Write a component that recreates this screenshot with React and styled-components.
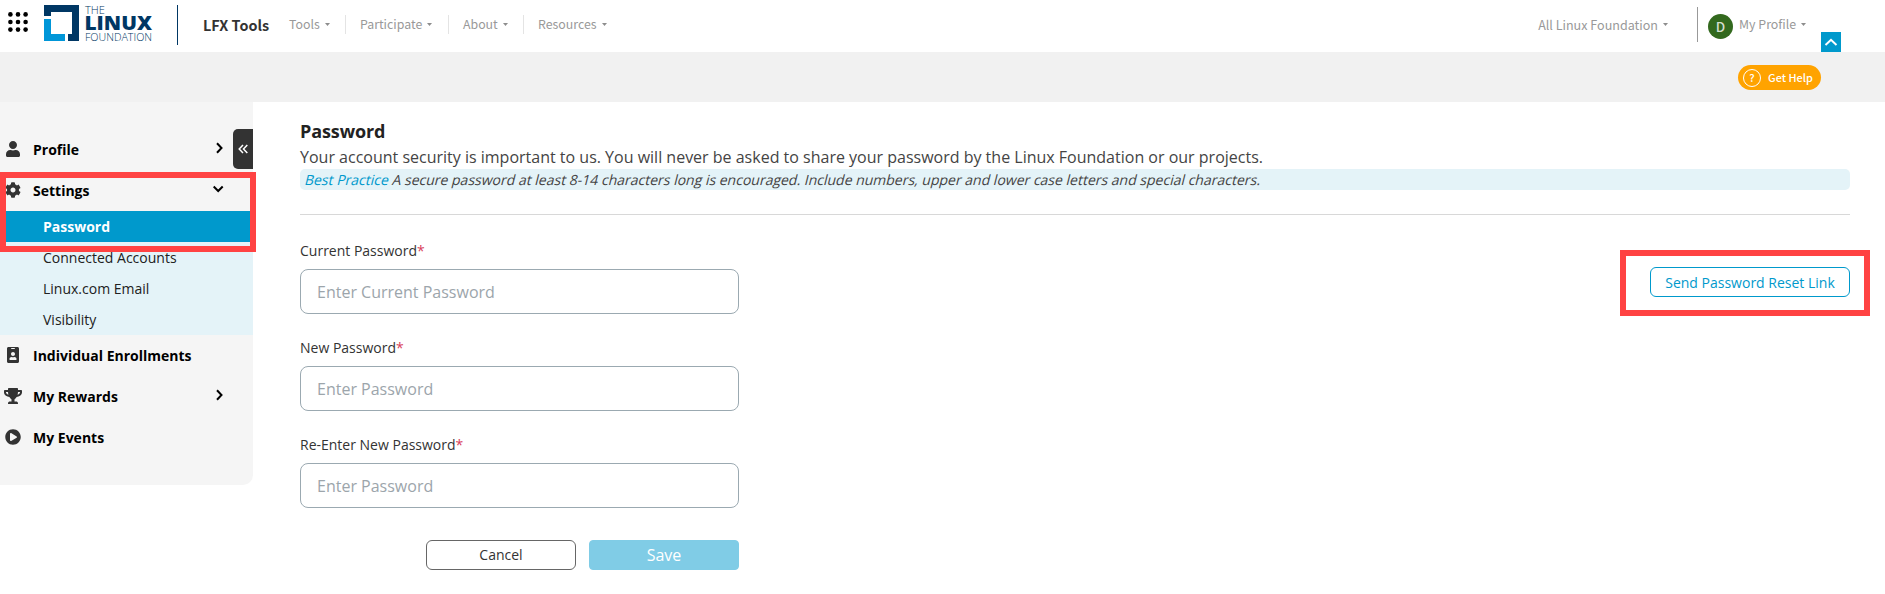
import React from 'react';
import styled, { createGlobalStyle, css } from 'styled-components';
import { FaUser, FaCog, FaIdBadge, FaTrophy, FaPlayCircle } from 'react-icons/fa';

const navFont = '"Noto Sans CJK JP", "Noto Sans CJK SC", "Noto Sans", sans-serif';

const GlobalStyle = createGlobalStyle`
  *, *::before, *::after { box-sizing: border-box; }
  body {
    margin: 0;
    background: #fff;
    color: #333;
    font-family: "Open Sans", "Noto Sans", sans-serif;
    overflow: hidden;
  }
`;

const Page = styled.div`
  position: relative;
  width: 1885px;
  height: 594px;
  overflow: hidden;
`;

const Header = styled.header`
  display: flex;
  align-items: flex-start;
  height: 52px;
  padding-left: 8px;
  font-family: ${navFont};
  background: #fff;
`;

const AppsIcon = styled.svg`
  width: 20px;
  height: 20px;
  margin-top: 12px;
  fill: #000;
`;

const Logo = styled.svg`
  width: 109px;
  height: 37px;
  margin: 5px 0 0 16px;
  overflow: visible;
`;

const BrandRule = styled.div`
  width: 1px;
  height: 40px;
  margin: 5px 25px 0 24px;
  background: #003764;
`;

const Brand = styled.div`
  width: 86px;
  margin-top: 13px;
  font-size: 14.4px;
  line-height: 24px;
  font-weight: 700;
  color: #333;
  white-space: nowrap;
`;

const Nav = styled.nav`
  display: flex;
  margin-top: 15px;
`;

const NavItem = styled.div`
  display: flex;
  align-items: center;
  width: ${(p) => p.$width}px;
  height: 19px;
  font-size: ${(p) => p.$size || 12.35}px;
  line-height: 19px;
  color: #999;
  white-space: nowrap;

  & + & {
    padding-left: 14px;
    border-left: 1px solid #e4e4e4;
  }
`;

const CaretIcon = styled.svg`
  flex: none;
  width: 5px;
  height: 3px;
  margin-left: 5px;
  fill: #8d8d8d;
`;

const HeaderRight = styled.div`
  display: flex;
  margin-left: auto;
  padding-right: 44px;
`;

const ProfileArea = styled.div`
  display: flex;
  align-items: flex-start;
  height: 35px;
  width: 124px;
  margin: 7px 0 0 29px;
  padding: 7px 0 0 10px;
  border-left: 1px solid #999;
`;

const Foundation = styled.div`
  margin-top: 15px;
`;

const Avatar = styled.div`
  width: 25px;
  height: 25px;
  margin-right: 6px;
  border-radius: 50%;
  background: #33691e;
  color: #d5dfd0;
  font-size: 13.5px;
  line-height: 24px;
  font-weight: 500;
  text-align: center;
`;

const ProfileName = styled.div`
  margin-top: 1px;
`;

const ScrollTop = styled.button`
  display: flex;
  align-items: center;
  justify-content: center;
  width: 20px;
  height: 20px;
  margin-top: 32px;
  padding: 0;
  border: 0;
  background: #0099cc;
`;

const Band = styled.div`
  display: flex;
  justify-content: flex-end;
  height: 50px;
  padding: 13px 64px 0 0;
  background: #f1f1f1;
`;

const HelpButton = styled.button`
  display: flex;
  align-items: center;
  width: 83px;
  height: 25px;
  padding: 0 0 0 5px;
  border: 0;
  border-radius: 13px;
  background: #ffa300;
  color: #fff;
  font-family: ${navFont};
  font-size: 10.9px;
  font-weight: 500;
  line-height: 18px;
  white-space: nowrap;
`;

const HelpMark = styled.span`
  width: 18px;
  height: 18px;
  margin-right: 7px;
  border: 1px solid #fff;
  border-radius: 50%;
  line-height: 15px;
  text-align: center;
`;

const HelpText = styled.span`
  padding-bottom: 1px;
`;

const Body = styled.div`
  display: flex;
  align-items: flex-start;
`;

const Sidebar = styled.aside`
  position: relative;
  width: 253px;
  height: 383px;
  padding-top: 27px;
  border-bottom-right-radius: 10px;
  background: #f5f5f5;
`;

const MenuRow = styled.div`
  display: flex;
  align-items: center;
  height: 41px;
  padding-left: 4px;
  font-size: 14px;
  font-weight: 700;
  color: #000;
`;

const MenuIcon = styled.span`
  display: flex;
  justify-content: center;
  width: 18px;
  margin-right: 11px;
  padding-bottom: 2px;
  color: #333;
`;

const MenuChevron = styled.svg`
  width: 12px;
  height: 12px;
  margin: 0 28px 3px auto;
  fill: none;
  stroke: #000;
  stroke-width: 2;
`;

const SubMenu = styled.div`
  background: #e4f3f8;
`;

const SubItem = styled.div`
  height: 31px;
  padding-left: 43px;
  font-size: 14px;
  line-height: 31px;
  color: #212121;
  ${(p) => p.$active && css`
    background: #0099cc;
    color: #fff;
    font-weight: 700;
  `}
`;

const CollapseTab = styled.button`
  position: absolute;
  top: 27px;
  right: 0;
  display: flex;
  align-items: center;
  justify-content: center;
  width: 20px;
  height: 40px;
  padding: 0;
  border: 0;
  border-radius: 5px 0 0 5px;
  background: #333;
`;

const Main = styled.main`
  flex: 1;
  padding: 16px 35px 0 47px;
`;

const Title = styled.h1`
  margin: 0 0 1px;
  font-size: 18px;
  line-height: 26px;
  font-weight: 700;
  letter-spacing: -0.1px;
  color: #222;
`;

const Intro = styled.p`
  margin: 0;
  font-size: 16px;
  line-height: 24px;
  color: #444;
`;

const Tip = styled.p`
  height: 21px;
  margin: 0 0 24px;
  padding-left: 4px;
  border-radius: 5px;
  background: #e4f3f8;
  font-size: 14px;
  line-height: 21px;
  color: #444;
`;

const Slanted = styled.span`
  display: inline-block;
  transform: skewX(-14deg);
  transform-origin: 0 75%;
`;

const TipLead = styled.span`
  color: #0099cc;
`;

const FormArea = styled.div`
  display: flex;
  justify-content: space-between;
  align-items: flex-start;
  border-top: 1px solid #d8d8d8;
`;

const Form = styled.form`
  width: 439px;
  padding-top: 26px;
`;

const Field = styled.label`
  display: block;
  height: 97px;
  font-size: 14px;
  line-height: 20px;
  color: #333;
`;

const Required = styled.span`
  color: #d9415b;
`;

const Input = styled.input`
  display: block;
  width: 100%;
  height: 45px;
  margin-top: 8px;
  padding: 0 16px;
  border: 1px solid #9ba9b1;
  border-radius: 8px;
  background: #fff;
  font: 16px/24px "Open Sans", sans-serif;

  &::placeholder { color: #9ca5ab; opacity: 1; }
`;

const Actions = styled.div`
  display: flex;
  justify-content: flex-end;
  gap: 13px;
  margin-top: 8px;
`;

const Button = styled.button`
  width: ${(p) => p.$width || 150}px;
  height: 30px;
  padding: 0;
  border: 1px solid ${(p) => p.$line};
  border-radius: ${(p) => p.$radius || 6}px;
  background: ${(p) => p.$fill || '#fff'};
  color: ${(p) => p.$ink};
  font: 400 ${(p) => p.$size || 14}px/${(p) => p.$leading || 28}px "Open Sans", sans-serif;
  white-space: nowrap;
`;

const ResetButton = styled(Button)`
  padding-top: 1px;
  line-height: 27px;
`;

const ResetSlot = styled.div`
  position: relative;
  display: flex;
  margin-top: 52px;
`;

const highlight = css`
  position: absolute;
  border: 6px solid #ff4343;
  pointer-events: none;
`;

const ResetHighlight = styled.div`
  ${highlight}
  inset: -17px -20px -19px -30px;
`;

const MenuHighlight = styled.div`
  ${highlight}
  top: 70px;
  left: 0;
  width: 256px;
  height: 80px;
`;

const Caret = () => (
  <CaretIcon viewBox="0 0 5 3"><path d="M0 0h5L2.5 3z" /></CaretIcon>
);

const dots = [2.4, 10, 17.6];

const LinuxLogo = () => (
  <Logo viewBox="0 0 109 37">
    <path fill="#003764" d="M0 0H35V36H24V29H28V7H7V11H0z" />
    <path fill="#0096d8" d="M0 14H7V29H21V36H0z" />
    <g fill="#003764" fontFamily="Open Sans, sans-serif">
      <text x="41" y="8.8" fontSize="11" fontWeight="300" textLength="20" lengthAdjust="spacingAndGlyphs">THE</text>
      <text x="40.5" y="24.5" fontSize="18.5" fontWeight="800" textLength="67.5" lengthAdjust="spacingAndGlyphs">LINUX</text>
      <text x="41" y="35.8" fontSize="11.3" fontWeight="300" textLength="67" lengthAdjust="spacingAndGlyphs">FOUNDATION</text>
    </g>
  </Logo>
);

const menu = [
  { label: 'Profile', icon: <FaUser size={16} />, chevron: 'M4 1.2L8.5 6L4 10.8' },
  {
    label: 'Settings',
    icon: <FaCog size={16} />,
    chevron: 'M0.7 3.5L5.2 8L9.7 3.5',
    items: ['Password', 'Connected Accounts', 'Linux.com Email', 'Visibility'],
  },
  { label: 'Individual Enrollments', icon: <FaIdBadge size={16} /> },
  { label: 'My Rewards', icon: <FaTrophy size={18} />, chevron: 'M4 1.2L8.5 6L4 10.8' },
  { label: 'My Events', icon: <FaPlayCircle size={16} /> },
];

const fields = [
  ['Current Password', 'Enter Current Password'],
  ['New Password', 'Enter Password'],
  ['Re-Enter New Password', 'Enter Password'],
];

export default function App() {
  return (
    <Page>
      <GlobalStyle />
      <Header>
        <AppsIcon viewBox="0 0 20 20">
          {dots.map((y) => dots.map((x) => <circle key={`${x}-${y}`} cx={x} cy={y} r="2.3" />))}
        </AppsIcon>
        <LinuxLogo />
        <BrandRule />
        <Brand>LFX Tools</Brand>
        <Nav>
          <NavItem $width={56}>Tools<Caret /></NavItem>
          <NavItem $width={103}>Participate<Caret /></NavItem>
          <NavItem $width={75}>About<Caret /></NavItem>
          <NavItem $width={90}>Resources<Caret /></NavItem>
        </Nav>
        <HeaderRight>
          <Foundation><NavItem $size={12.55}>All Linux Foundation<Caret /></NavItem></Foundation>
          <ProfileArea>
            <Avatar>D</Avatar>
            <ProfileName><NavItem $size={12.4}>My Profile<Caret /></NavItem></ProfileName>
          </ProfileArea>
          <ScrollTop>
            <svg width="14" height="9" viewBox="0 0 14 9" fill="none" stroke="#fff" strokeWidth="2"><path d="M1.5 7L7 1.8L12.5 7" /></svg>
          </ScrollTop>
        </HeaderRight>
      </Header>
      <Band>
        <HelpButton><HelpMark>?</HelpMark><HelpText>Get Help</HelpText></HelpButton>
      </Band>
      <Body>
        <Sidebar>
          {menu.map(({ label, icon, chevron, items }) => (
            <React.Fragment key={label}>
              <MenuRow>
                <MenuIcon>{icon}</MenuIcon>
                {label}
                {chevron && <MenuChevron viewBox="0 0 12 12"><path d={chevron} /></MenuChevron>}
              </MenuRow>
              {items && (
                <SubMenu>
                  {items.map((item, i) => <SubItem key={item} $active={i === 0}>{item}</SubItem>)}
                </SubMenu>
              )}
            </React.Fragment>
          ))}
          <CollapseTab>
            <svg width="10" height="10" viewBox="0 0 10 10" fill="none" stroke="#fff" strokeWidth="1.5"><path d="M5 1L1.2 5L5 9M9.3 1L5.5 5L9.3 9" /></svg>
          </CollapseTab>
          <MenuHighlight />
        </Sidebar>
        <Main>
          <Title>Password</Title>
          <Intro>Your account security is important to us. You will never be asked to share your password by the Linux Foundation or our projects.</Intro>
          <Tip>
            <Slanted>
              <TipLead>Best Practice</TipLead> A secure password at least 8-14 characters long is encouraged. Include numbers, upper and lower case letters and special characters.
            </Slanted>
          </Tip>
          <FormArea>
            <Form>
              {fields.map(([label, placeholder]) => (
                <Field key={label}>
                  {label}<Required>*</Required>
                  <Input type="password" placeholder={placeholder} />
                </Field>
              ))}
              <Actions>
                <Button type="button" $line="#666" $ink="#333">Cancel</Button>
                <Button type="button" $line="#80cce6" $fill="#80cce6" $ink="#fff" $radius={4} $size={16}>Save</Button>
              </Actions>
            </Form>
            <ResetSlot>
              <ResetButton type="button" $width={200} $line="#0099cc" $ink="#0099cc">Send Password Reset Link</ResetButton>
              <ResetHighlight />
            </ResetSlot>
          </FormArea>
        </Main>
      </Body>
    </Page>
  );
}
